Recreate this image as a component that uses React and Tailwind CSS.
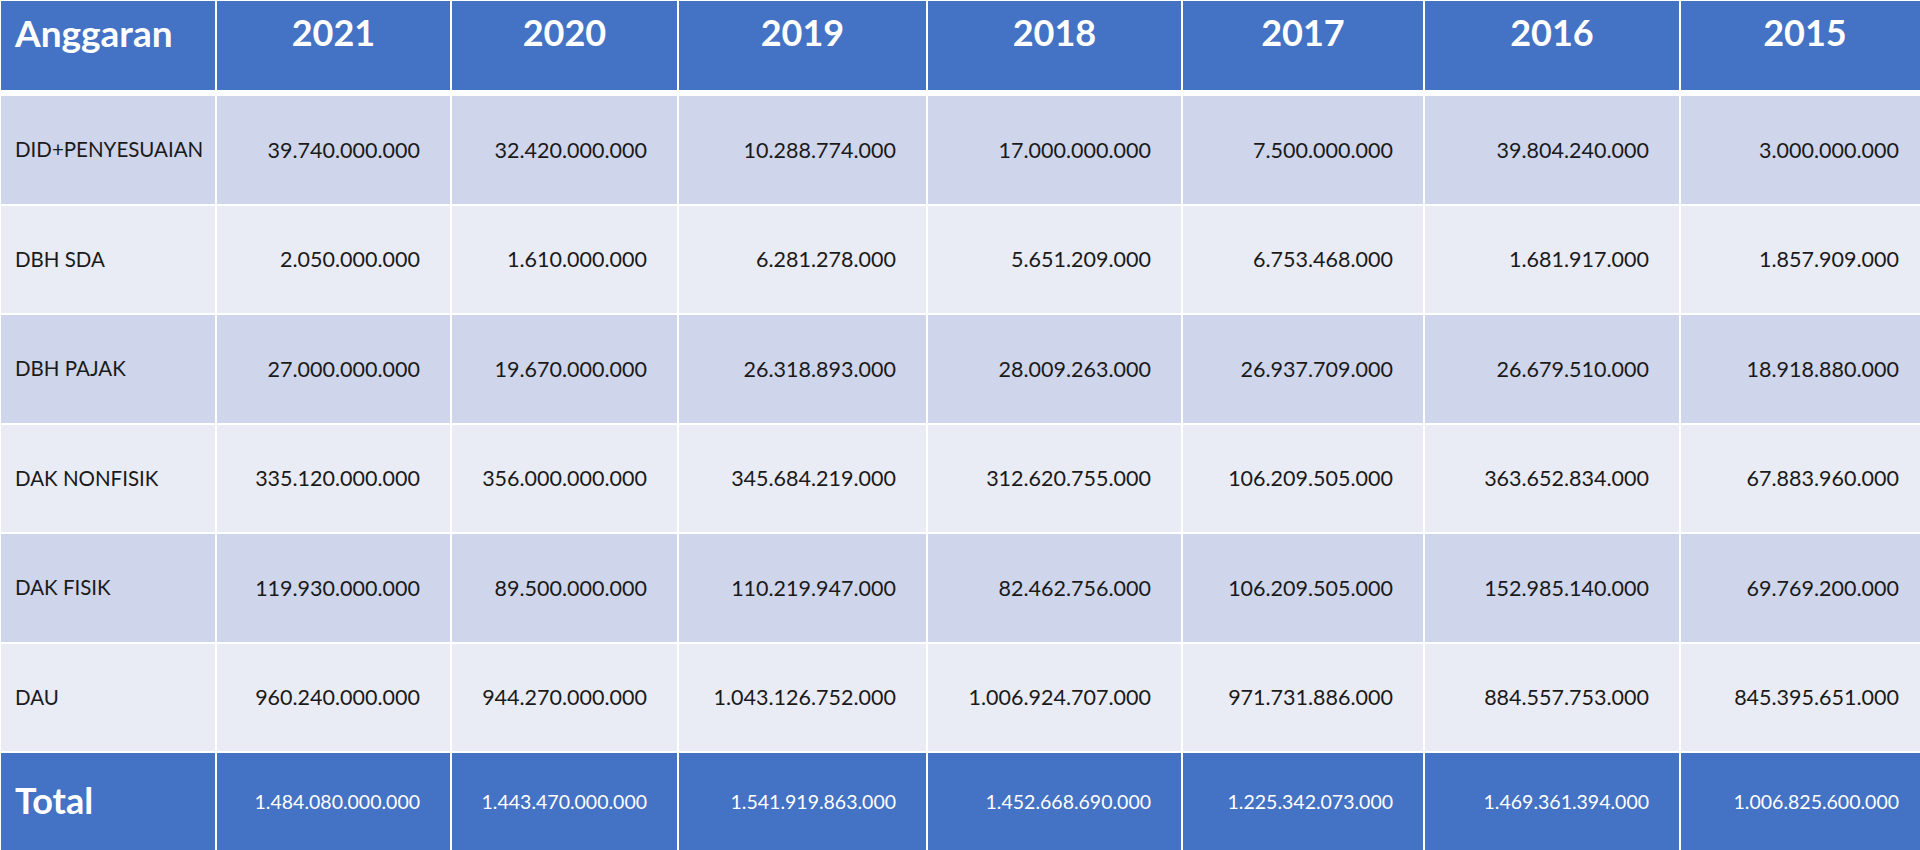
const years = ['2021', '2020', '2019', '2018', '2017', '2016', '2015'];

const rows = [
  ['DID+PENYESUAIAN', '39.740.000.000', '32.420.000.000', '10.288.774.000', '17.000.000.000', '7.500.000.000', '39.804.240.000', '3.000.000.000'],
  ['DBH SDA', '2.050.000.000', '1.610.000.000', '6.281.278.000', '5.651.209.000', '6.753.468.000', '1.681.917.000', '1.857.909.000'],
  ['DBH PAJAK', '27.000.000.000', '19.670.000.000', '26.318.893.000', '28.009.263.000', '26.937.709.000', '26.679.510.000', '18.918.880.000'],
  ['DAK NONFISIK', '335.120.000.000', '356.000.000.000', '345.684.219.000', '312.620.755.000', '106.209.505.000', '363.652.834.000', '67.883.960.000'],
  ['DAK FISIK', '119.930.000.000', '89.500.000.000', '110.219.947.000', '82.462.756.000', '106.209.505.000', '152.985.140.000', '69.769.200.000'],
  ['DAU', '960.240.000.000', '944.270.000.000', '1.043.126.752.000', '1.006.924.707.000', '971.731.886.000', '884.557.753.000', '845.395.651.000'],
];

const totals = ['1.484.080.000.000', '1.443.470.000.000', '1.541.919.863.000', '1.452.668.690.000', '1.225.342.073.000', '1.469.361.394.000', '1.006.825.600.000'];

// column template shared by every row
const cols = 'grid grid-cols-[214px_233px_225px_247px_253px_240px_254px_248px] gap-x-[2px]';

export default function App() {
  return (
    <div className="h-[850px] w-[1920px] overflow-hidden bg-white font-['Lato','Liberation_Sans',sans-serif]">
      <div className="flex w-[1929px] flex-col gap-[2px] pl-px pt-px">
        {/* Header */}
        <div className={`${cols} mb-[4px] h-[89px]`}>
          <div className="bg-[#4472c4] pl-[14px] pt-[13px] text-[37px] font-bold leading-none text-white">
            Anggaran
          </div>
          {years.map((y) => (
            <div key={y} className="bg-[#4472c4] pt-[13px] text-center text-[36px] font-bold leading-none text-white">
              {y}
            </div>
          ))}
        </div>

        {/* Body */}
        {rows.map((r, i) => (
          <div key={r[0]} className={`${cols} h-[107.5px] text-[#1a1a1a]`}>
            {r.map((cell, j) => (
              <div
                key={j}
                className={`flex items-center ${i % 2 === 0 ? 'bg-[#cfd5ea]' : 'bg-[#e9ebf5]'} ${
                  j === 0 ? 'pl-[14px] text-[20.5px]' : 'justify-end pr-[30px] text-[21.5px]'
                }`}
              >
                {cell}
              </div>
            ))}
          </div>
        ))}

        {/* Total */}
        <div className={`${cols} h-[97px] text-white`}>
          <div className="flex items-center bg-[#4472c4] pb-[3px] pl-[14px] text-[36px] font-bold">Total</div>
          {totals.map((t, j) => (
            <div key={j} className="flex items-center justify-end bg-[#4472c4] pr-[30px] text-[19.5px]">
              {t}
            </div>
          ))}
        </div>
      </div>
    </div>
  );
}
